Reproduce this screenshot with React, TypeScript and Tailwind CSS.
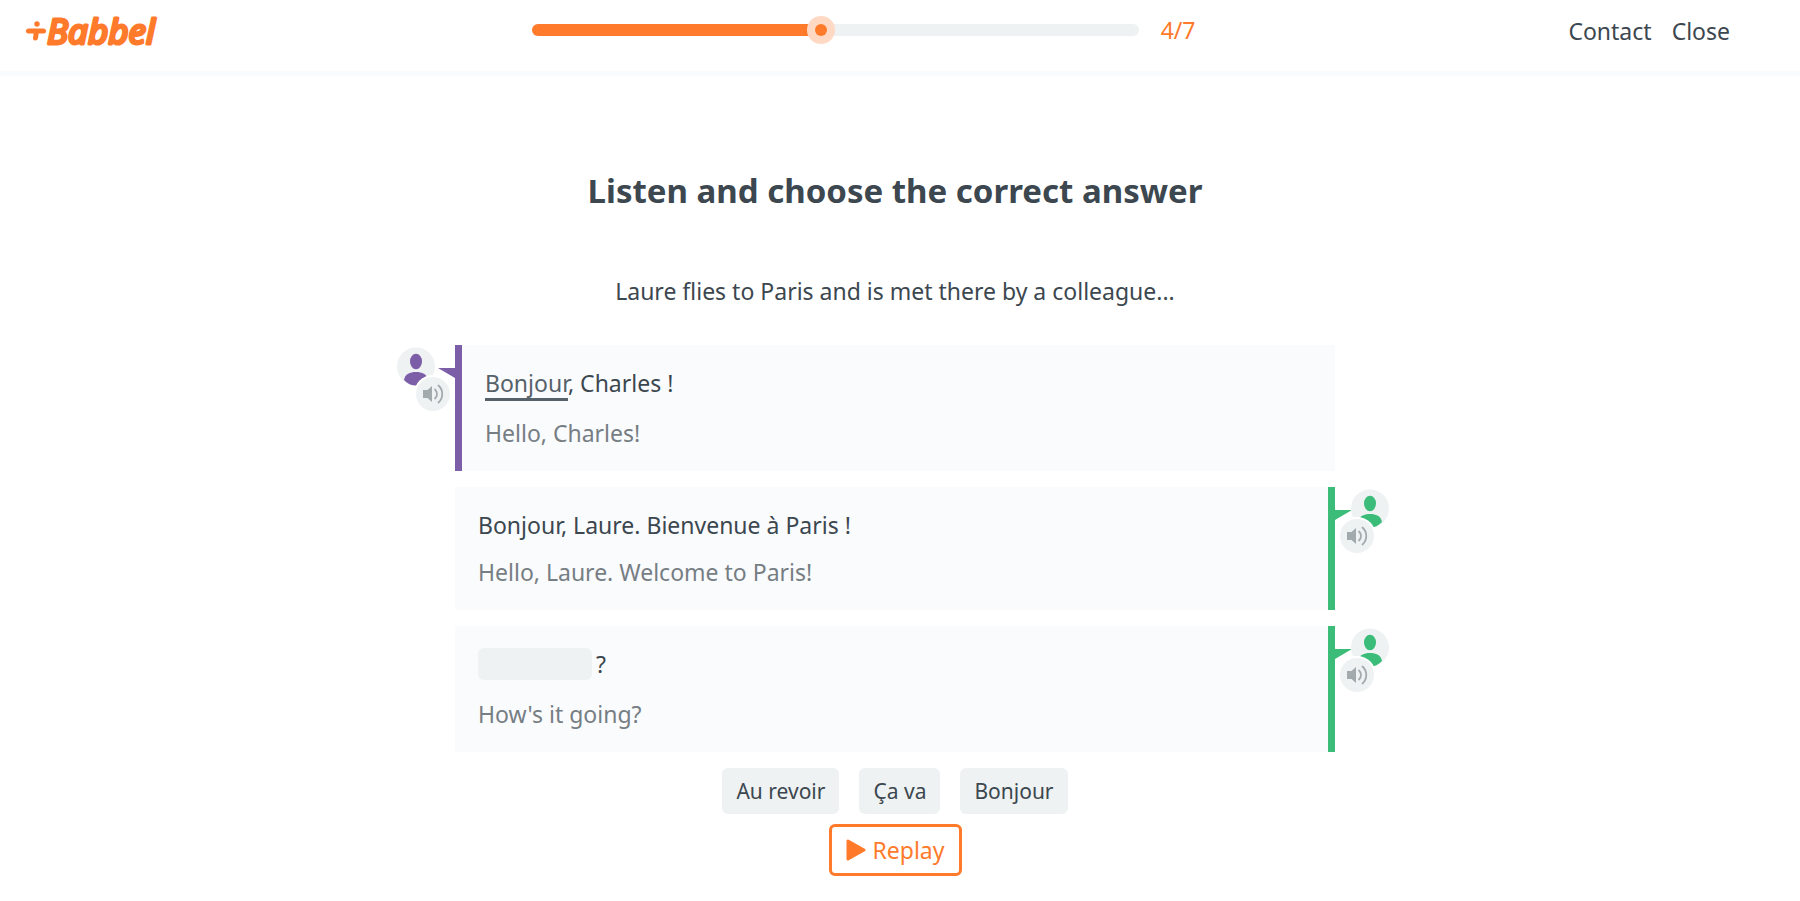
import React from 'react';

type Side = 'left' | 'right';

const Logo = () => (
  <a href="#" aria-label="Babbel" className="block text-[#ff7a2a]">
    <svg width="150" height="56" viewBox="0 -8 150 56" fill="none">
      <path d="M2.5 20H17.5M10.5 20L9.5 27" stroke="currentColor" strokeWidth="5" strokeLinecap="round" />
      <circle cx="11" cy="13" r="2.7" fill="currentColor" />
      <text
        x="21"
        y="33"
        fill="currentColor"
        stroke="currentColor"
        strokeWidth="3"
        strokeLinejoin="round"
        className="font-['Noto_Sans',sans-serif] text-[35px] font-normal italic"
      >
        Babbel
      </text>
    </svg>
  </a>
);

const Progress = ({ step, total }: { step: number; total: number }) => (
  <div className="flex items-center gap-[22px]">
    <div className="flex h-3 flex-1 items-center rounded-full bg-[#eef2f3]">
      <div className="h-3 w-[48%] rounded-full bg-[#ff7a2a]"></div>
      <div className="-ml-4 flex size-7 items-center justify-center rounded-full bg-[#ffd9c3]">
        <div className="size-3 rounded-full bg-[#ff7a2a]"></div>
      </div>
    </div>
    <span className="text-[#ff7a2a]">
      {step}/{total}
    </span>
  </div>
);

const Speaker = ({ side }: { side: Side }) => {
  const isLeft = side === 'left';
  const cx = isLeft ? 25 : 35;
  return (
    <div className={isLeft ? 'relative w-16 text-[#7b5ea7]' : 'relative w-16 text-[#3cbc79]'}>
      <svg width="64" height="72" viewBox="0 0 64 72" fill="currentColor">
        <path d={isLeft ? 'M47 23H64V33Z' : 'M17 23H0V33Z'} />
        <circle cx={cx} cy="21.5" r="19" fill="#eef2f3" />
        <ellipse cx={cx} cy="16.5" rx="6" ry="7.8" />
        <path d={`M${cx - 12} 35C${cx - 11} 29 ${cx - 6} 27 ${cx} 27S${cx + 11} 29 ${cx + 12} 35Q${cx + 7} 40.5 ${cx} 40.5T${cx - 12} 35Z`} />
      </svg>
      {/* Play sound */}
      <button
        type="button"
        aria-label="Play sound"
        className={
          isLeft
            ? 'absolute left-[25px] top-8 flex size-[34px] items-center justify-center rounded-full bg-[#eef2f3] ring-2 ring-white'
            : 'absolute left-[5px] top-8 flex size-[34px] items-center justify-center rounded-full bg-[#eef2f3] ring-2 ring-white'
        }
      >
        <svg width="22" height="22" viewBox="0 0 22 22" fill="none" stroke="#a3aaae" strokeWidth="1.8" strokeLinecap="round">
          <path d="M1 7H5.5L10 3V19L5.5 15H1Z" fill="#a3aaae" stroke="none" />
          <path d="M13 6.5C15.7 9 15.7 13 13 15.5M16.5 2.5C21.5 7 21.5 15 16.5 19.5" />
        </svg>
      </button>
    </div>
  );
};

type LineProps = {
  side: Side;
  text: React.ReactNode;
  translation: string;
  compact?: boolean;
};

const Line = ({ side, text, translation, compact }: LineProps) => (
  <div className="flex">
    {side === 'left' ? <Speaker side="left" /> : <div className="w-16"></div>}
    <div
      className={
        side === 'left'
          ? 'flex-1 border-l-[7px] border-[#7b5ea7] bg-[#fafbfd] px-[23px] pb-[22px] pt-5'
          : 'flex-1 border-r-[7px] border-[#3cbc79] bg-[#fafbfd] px-[23px] pb-[22px] pt-5'
      }
    >
      <div className="flex h-9 items-center">{text}</div>
      <p className={compact ? 'mt-[13px] leading-8 text-[#767e84]' : 'mt-4 leading-8 text-[#767e84]'}>{translation}</p>
    </div>
    {side === 'right' ? <Speaker side="right" /> : <div className="w-16"></div>}
  </div>
);

const App = () => {
  return (
    <div className="min-h-screen bg-white font-['Noto_Sans',sans-serif] text-[23px] leading-8 text-[#3c474f]">
      <header className="grid h-[76px] grid-cols-[19fr_25fr_20fr] items-start border-b-[5px] border-[#fafbfd] pl-[26px] pr-[70px] pt-[3px]">
        <Logo />
        <div className="pr-[2px] pt-[11px]">
          <Progress step={4} total={7} />
        </div>
        <nav className="flex justify-end gap-5 pt-3">
          <a href="#">Contact</a>
          <a href="#">Close</a>
        </nav>
      </header>

      <main className="mx-auto flex max-w-[1018px] flex-col pr-[10px] pt-[95px]">
        <h1 className="text-center text-[33px] font-bold leading-10">Listen and choose the correct answer</h1>
        <p className="mt-16 text-center">Laure flies to Paris and is met there by a colleague...</p>

        <div className="mt-[38px] flex flex-col gap-4">
          <Line
            side="left"
            text={
              <p>
                <span className="underline decoration-3 underline-offset-[6px] text-[#56616a]">Bonjour</span>, Charles !
              </p>
            }
            translation="Hello, Charles!"
          />
          <Line
            side="right"
            text={<p>Bonjour, Laure. Bienvenue à Paris !</p>}
            translation="Hello, Laure. Welcome to Paris!"
            compact
          />
          <Line
            side="right"
            text={
              <p className="flex items-center gap-1">
                <span className="h-8 w-[114px] rounded-md bg-[#eef2f3]"></span>?
              </p>
            }
            translation="How's it going?"
          />
        </div>

        {/* Answers */}
        <div className="mt-4 flex justify-center gap-5 text-[21px]">
          <button type="button" className="h-[46px] rounded-md bg-[#eef2f3] px-[14px]">Au revoir</button>
          <button type="button" className="h-[46px] rounded-md bg-[#eef2f3] px-[14px]">Ça va</button>
          <button type="button" className="h-[46px] rounded-md bg-[#eef2f3] px-[14px]">Bonjour</button>
        </div>
        <button
          type="button"
          className="mt-[10px] flex h-[52px] items-center gap-[7px] self-center rounded-md border-3 border-[#ff7a2a] px-[14px] text-[#ff7a2a]"
        >
          <svg width="20" height="22" viewBox="0 0 20 22" fill="currentColor" stroke="currentColor" strokeWidth="3" strokeLinejoin="round">
            <path d="M2 2V20L18 11Z" />
          </svg>
          Replay
        </button>
      </main>
    </div>
  );
};

export default App;
